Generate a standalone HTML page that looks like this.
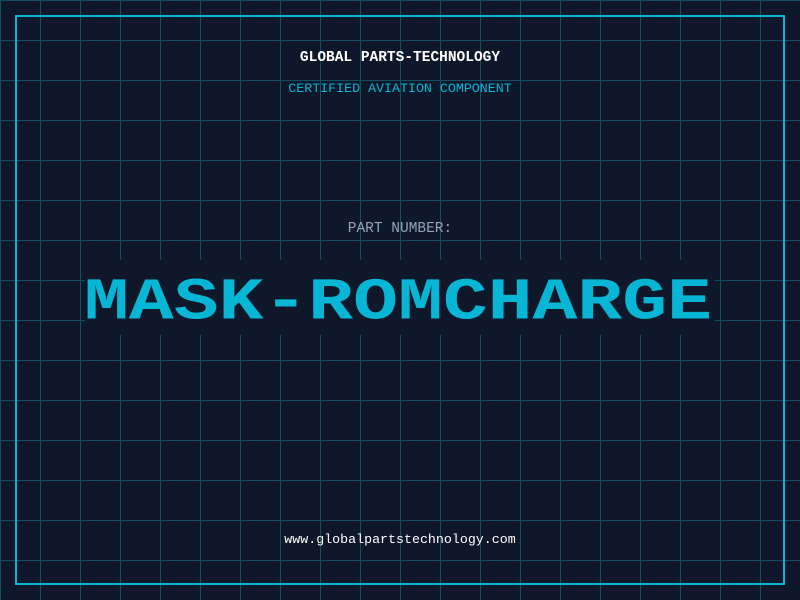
<!DOCTYPE html>
<html><head><style>
html,body{margin:0;padding:0}
body{width:800px;height:600px;position:relative;overflow:hidden;background:#0f172a;
background-image:linear-gradient(#134e63 1px,transparent 1px),linear-gradient(90deg,#134e63 1px,transparent 1px);
background-size:40px 40px;background-position:0 0;font-family:"Liberation Mono",monospace}
.border{position:absolute;left:15px;top:15px;width:766px;height:566px;border:2px solid #06b6d4}
.t{position:absolute;left:0;width:800px;text-align:center;white-space:nowrap}
.big{position:absolute;left:85px;top:260px;width:630px;height:75px;background:#0f172a;color:#06b6d4;
font-weight:bold;font-size:74px;line-height:75px;text-align:center;letter-spacing:0;overflow:hidden}
.big span{position:relative;top:6px;left:-2px;display:block;transform:scale(1.01,0.8);transform-origin:50% 50%}
</style></head><body>
<div class="border"></div>
<div class="t" style="top:50px;font-size:14.5px;font-weight:bold;color:#fff">GLOBAL PARTS-TECHNOLOGY</div>
<div class="t" style="top:81px;font-size:13.3px;color:#06b6d4">CERTIFIED AVIATION COMPONENT</div>
<div class="t" style="top:221px;font-size:14.5px;color:#94a3b8">PART NUMBER:</div>
<div class="big"><span>MASK-ROMCHARGE</span></div>
<div class="t" style="top:532px;font-size:13.3px;color:#fff">www.globalpartstechnology.com</div>
</body></html>
